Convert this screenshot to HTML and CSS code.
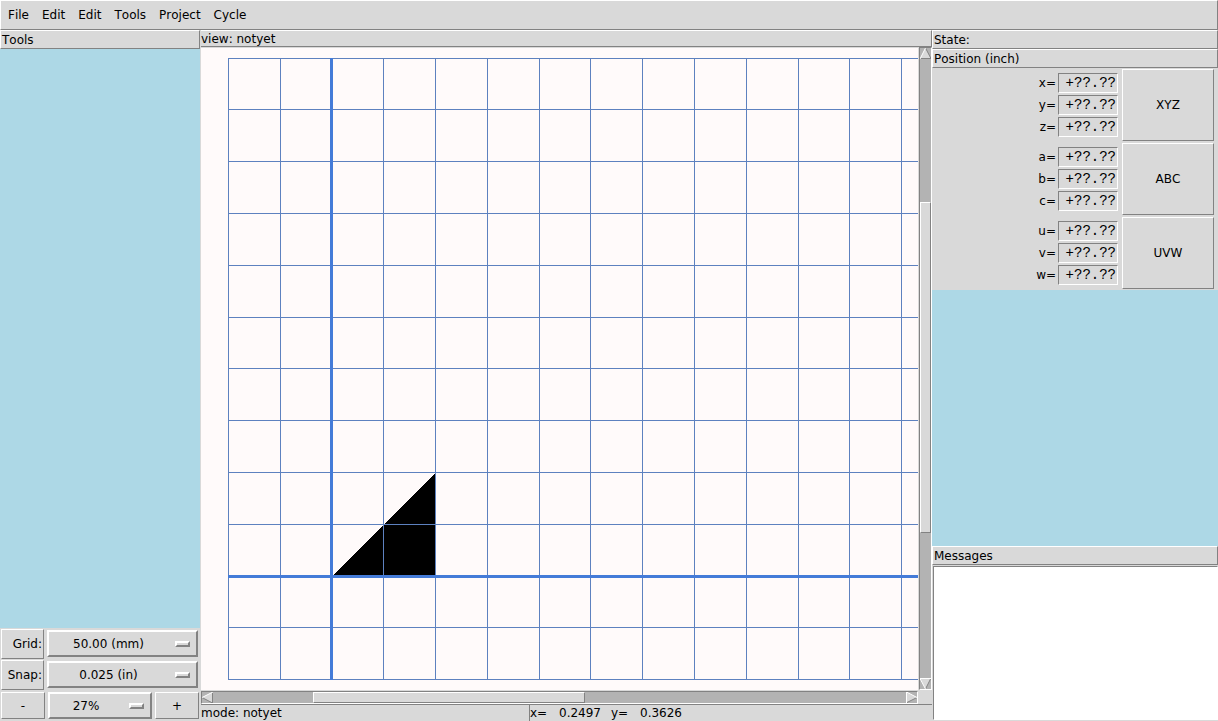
FILE: index.html
```html
<!DOCTYPE html>
<html lang="en">
<head>
<meta charset="utf-8">
<title>CAM editor</title>
<link rel="stylesheet" href="styles.css">
</head>
<body>
<nav class="menubar" aria-label="Main menu">
  <button class="menu">File</button><button class="menu">Edit</button><button class="menu">Edit</button><button class="menu">Tools</button><button class="menu">Project</button><button class="menu">Cycle</button>
</nav>
<main class="workspace">
  <aside class="sidebar">
    <h2 class="title">Tools</h2>
    <div class="fill"></div>
    <div class="controls">
      <div class="row">
        <label class="caption" for="grid">Grid:</label>
        <div class="picker"><select id="grid"><option>50.00 (mm)</option></select><span class="knob"></span></div>
      </div>
      <div class="row">
        <label class="caption" for="snap">Snap:</label>
        <div class="picker"><select id="snap"><option>0.025 (in)</option></select><span class="knob"></span></div>
      </div>
      <div class="row zoom">
        <button class="step" aria-label="Zoom out">-</button>
        <div class="picker"><select id="zoom" aria-label="Zoom"><option>27%</option></select><span class="knob"></span></div>
        <button class="step" aria-label="Zoom in">+</button>
      </div>
    </div>
  </aside>
  <section class="view">
    <h2 class="title view-title">view: notyet</h2>
    <div class="stage">
      <svg class="canvas" width="100%" height="100%" role="img" aria-label="Drawing area">
        <g transform="translate(-201 -48)" shape-rendering="crispEdges">
          <path d="M332 576L435 473V576Z" fill="#000"/>
          <g fill="none" stroke="#5d81bf">
            <path d="M228.5 58V680M280.5 58V680M383.5 58V680M435.5 58V680M487.5 58V680M539.5 58V680M590.5 58V680M642.5 58V680M694.5 58V680M746.5 58V680M798.5 58V680M849.5 58V680M901.5 58V680"/>
            <path d="M228 58.500H930M228 109.500H930M228 161.500H930M228 213.500H930M228 265.500H930M228 317.500H930M228 368.500H930M228 420.500H930M228 472.500H930M228 524.500H930M228 627.500H930M228 679.500H930"/>
          </g>
          <path d="M331.500 58V680M228 576.500H930" fill="none" stroke="#447bd8" stroke-width="3"/>
        </g>
      </svg>
      <div class="scroll vertical">
        <button class="arrow" aria-label="Scroll up"><svg width="11" height="11"><path d="M5.500 0L11 11H0Z" fill="#d9d9d9"/><path d="M5.500 0L11 10.500H0" fill="none" stroke="#828282"/><path d="M0 11L5.500 0" stroke="#fff"/></svg></button>
        <div class="trough"><div class="gap" style="flex-grow:144"></div><div class="thumb" style="flex-grow:331"></div><div class="gap" style="flex-grow:146"></div></div>
        <button class="arrow" aria-label="Scroll down"><svg width="11" height="11"><path d="M0 0H11L5.500 11Z" fill="#d9d9d9"/><path d="M11 0L5.500 11" stroke="#828282"/><path d="M11 .5H0L5.500 11" fill="none" stroke="#fff"/></svg></button>
      </div>
      <div class="scroll horizontal">
        <button class="arrow" aria-label="Scroll left"><svg width="11" height="11"><path d="M11 0V11L0 5.500Z" fill="#d9d9d9"/><path d="M10.500 0V11L0 5.500" fill="none" stroke="#828282"/><path d="M0 5.500L11 0" stroke="#fff"/></svg></button>
        <div class="trough"><div class="gap" style="flex-grow:100"></div><div class="thumb" style="flex-grow:272"></div><div class="gap" style="flex-grow:322"></div></div>
        <button class="arrow" aria-label="Scroll right"><svg width="11" height="11"><path d="M0 0L11 5.500L0 11Z" fill="#d9d9d9"/><path d="M11 5.500L0 11" stroke="#828282"/><path d="M.5 11V0L11 5.500" fill="none" stroke="#fff"/></svg></button>
      </div>
    </div>
    <footer class="status">
      <span class="mode">mode: notyet</span>
      <span class="coords"><span>x=</span><span>0.2497</span><span>y=</span><span>0.3626</span></span>
    </footer>
  </section>
  <aside class="panel">
    <h2 class="title">State:</h2>
    <h2 class="title">Position (inch)</h2>
    <div class="axes">
      <div class="group">
        <div class="readouts">
          <label for="x">x=</label><output id="x">+??.??</output>
          <label for="y">y=</label><output id="y">+??.??</output>
          <label for="z">z=</label><output id="z">+??.??</output>
        </div>
        <button class="axis">XYZ</button>
      </div>
      <div class="group">
        <div class="readouts">
          <label for="a">a=</label><output id="a">+??.??</output>
          <label for="b">b=</label><output id="b">+??.??</output>
          <label for="c">c=</label><output id="c">+??.??</output>
        </div>
        <button class="axis">ABC</button>
      </div>
      <div class="group">
        <div class="readouts">
          <label for="u">u=</label><output id="u">+??.??</output>
          <label for="v">v=</label><output id="v">+??.??</output>
          <label for="w">w=</label><output id="w">+??.??</output>
        </div>
        <button class="axis">UVW</button>
      </div>
    </div>
    <div class="fill"></div>
    <label class="title" for="messages">Messages</label>
    <textarea class="messages" id="messages"></textarea>
  </aside>
</main>
</body>
</html>
```
FILE: styles.css
```css
:root {
  --face: #d9d9d9;
  --light: #fff;
  --dark: #828282;
  --trough: #b3b3b3;
  --blue: #add8e6;
  --raised: var(--light) var(--dark) var(--dark) var(--light);
  --sunken: var(--dark) var(--light) var(--light) var(--dark);
}
* { box-sizing: border-box; }
body {
  margin: 0;
  height: 100vh;
  display: flex;
  flex-direction: column;
  background: var(--face);
  color: #000;
  font: 12px/16px "DejaVu Sans", sans-serif;
  font-kerning: none;
}
button, select, textarea {
  margin: 0;
  padding: 0;
  border: 0 solid;
  border-radius: 0;
  background: var(--face);
  color: inherit;
  font: inherit;
  outline: none;
}
.menubar {
  display: flex;
  gap: 1px;
  padding: 5px 1px;
  border: 1px solid;
  border-color: var(--raised);
}
.menu { padding: 1px 6px; }
.workspace {
  flex: 1;
  min-height: 0;
  display: grid;
  grid-template-columns: 200px minmax(0, 1fr) 286px;
}
.sidebar, .view, .panel {
  display: flex;
  flex-direction: column;
  min-height: 0;
}
.title {
  margin: 0;
  padding: 1px 0 0 1px;
  border: 1px solid;
  border-color: var(--raised);
  background: var(--face);
  font: inherit;
}
.fill { flex: 1; background: var(--blue); }

.row {
  display: grid;
  grid-template-columns: 43px minmax(0, 1fr);
  gap: 3px;
  height: 31px;
  padding: 1px 2px 0 1px;
}
.caption {
  padding: 6px 1px 0 0;
  border: 1px solid;
  border-color: var(--raised);
  text-align: right;
}
.picker { position: relative; height: 27px; margin-top: 1px; }
.picker select {
  width: 100%;
  height: 100%;
  padding-right: 28px;
  border-width: 2px;
  border-color: var(--raised);
  appearance: none;
  text-align: center;
  text-align-last: center;
}
.knob {
  position: absolute;
  right: 8px;
  top: 11px;
  width: 15px;
  height: 6px;
  border: 2px solid;
  border-color: var(--raised);
  pointer-events: none;
}
.zoom {
  grid-template-columns: 44px minmax(0, 1fr) 44px;
  padding: 2px 1px 0;
}
.zoom .picker { margin-top: 0; }
.step, .axis {
  border-width: 1px;
  border-color: var(--raised);
}
.step { height: 27px; }

.view { padding-left: 1px; }
.view-title {
  margin-bottom: 1px;
  padding-left: 0;
  border-left: 0;
  line-height: 14px;
}
.stage {
  flex: 1;
  min-height: 0;
  display: grid;
  grid-template-columns: minmax(0, 1fr) 13px;
  grid-template-rows: minmax(0, 1fr) 13px;
  gap: 1px;
}
.canvas { display: block; background: #fffafa; overflow: hidden; }
.scroll {
  display: flex;
  border: 1px solid;
  border-color: var(--sunken);
  background: var(--trough);
}
.vertical { margin-top: -1px; }
.vertical, .vertical .trough { flex-direction: column; }
.trough { flex: 1; display: flex; }
.gap, .thumb { flex-basis: 0; }
.thumb {
  border: 1px solid;
  border-color: var(--raised);
  background: var(--face);
}
.arrow { background: none; width: 11px; height: 11px; }
.arrow svg { display: block; }
.status {
  display: grid;
  grid-template-columns: 328px minmax(0, 1fr);
  height: 17px;
  border-top: 1px solid var(--dark);
}
.coords {
  display: grid;
  grid-template-columns: 29px 52px 29px 1fr;
  border-left: 1px solid var(--dark);
}

.axes { background: var(--face); }
.group {
  display: grid;
  grid-template-columns: minmax(0, 1fr) 92px;
  gap: 4px;
  padding: 1px 4px 1px 0;
}
.readouts {
  display: grid;
  grid-template-columns: minmax(0, 1fr) 60px;
  align-content: center;
  gap: 2px;
  text-align: right;
}
.readouts label { padding-top: 2px; }
.readouts output {
  height: 20px;
  padding: 1px 1px 0;
  border: 1px solid;
  border-color: var(--sunken);
  font: 14px/17px "Liberation Mono", monospace;
}
.axis { height: 72px; }
.messages {
  height: 154px;
  margin: 1px 0 1px 1px;
  border-width: 1px;
  border-color: var(--sunken);
  background: #fff;
  resize: none;
}
```
